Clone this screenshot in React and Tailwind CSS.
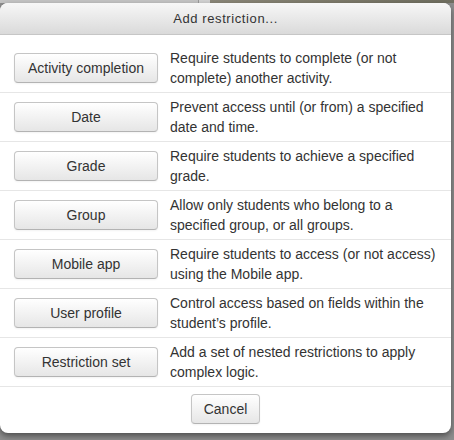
const OPTIONS = [
  { label: 'Activity completion', desc: 'Require students to complete (or not complete) another activity.' },
  { label: 'Date', desc: 'Prevent access until (or from) a specified date and time.' },
  { label: 'Grade', desc: 'Require students to achieve a specified grade.' },
  { label: 'Group', desc: 'Allow only students who belong to a specified group, or all groups.' },
  { label: 'Mobile app', desc: 'Require students to access (or not access) using the Mobile app.' },
  { label: 'User profile', desc: 'Control access based on fields within the student\u2019s profile.' },
  { label: 'Restriction set', desc: 'Add a set of nested restrictions to apply complex logic.' },
]

const btn =
  'h-[30px] rounded-[4px] border border-[#c5c5c5] border-b-[#b3b3b3] bg-gradient-to-b from-white to-[#e6e6e6] text-[14px] text-[#333] shadow-[inset_0_1px_0_rgba(255,255,255,0.3),0_1px_2px_rgba(0,0,0,0.05)]'

export default function App() {
  return (
    <div
      className="w-[454px] h-[440px] overflow-hidden bg-[#8e8e8e] flex flex-col"
      style={{ fontFamily: '"Liberation Sans", Arial, sans-serif' }}
    >
      <div className="h-[3px] flex shrink-0">
        <div className="w-[198px] bg-[#c4c4c4]" />
        <div className="w-[1px] bg-[#9a9a9a]" />
        <div className="w-[11px] bg-[#d2d2d2]" />
        <div className="flex-1 bg-gradient-to-r from-[#8b8779] via-[#7d7a6a] to-[#6f6e60]" />
      </div>
      <div className="w-[451px] bg-white rounded-[8px] shadow-[0_3px_6px_rgba(0,0,0,0.45)] flex flex-col shrink-0">
        <div className="h-[32px] rounded-t-[8px] bg-gradient-to-b from-[#f7f7f7] to-[#dadada] border-b border-[#c6c6c6] flex items-center justify-center">
          <span className="text-[13px] text-[#333] tracking-[0.6px]">Add restriction...</span>
        </div>
        <div className="pt-[9px]">
          {OPTIONS.map((o) => (
            <div key={o.label} className="h-[49px] border-b border-[#e6e6e6] flex items-center">
              <div className="w-[170px] shrink-0 pl-[14px] pr-[12px]">
                <button className={`${btn} w-[144px]`}>{o.label}</button>
              </div>
              <p className="pr-[8px] text-[14px] leading-[20px] text-[#333]">{o.desc}</p>
            </div>
          ))}
        </div>
        <div className="pt-[7px] pb-[9px] flex justify-center">
          <button className={`${btn} w-[69px]`}>Cancel</button>
        </div>
      </div>
    </div>
  )
}
